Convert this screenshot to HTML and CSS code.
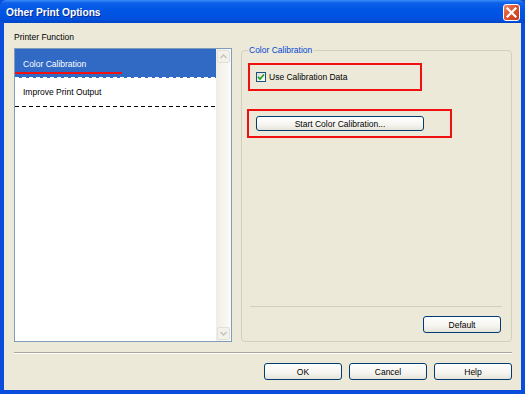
FILE: index.html
```html
<!DOCTYPE html>
<html>
<head>
	<meta charset="utf-8">
	<title>Other Print Options</title>
	<link rel="stylesheet" href="styles.css">
</head>
<body>
	<div class="window">
		<div class="titlebar">
			<span class="title">Other Print Options</span>
			<span class="close">
				<svg width="11" height="11" viewBox="0 0 11 11"><path d="M1.5 1.5 L9.5 9.5 M9.5 1.5 L1.5 9.5" stroke="#fff" stroke-width="2.2" stroke-linecap="square"/></svg>
			</span>
		</div>
		<div class="client">
			<div class="main">
				<div class="func-col">
					<div class="label">Printer Function</div>
					<div class="listbox">
						<ul class="items">
							<li class="item selected">
								<span class="item-text">Color Calibration</span>
								<span class="underline"></span>
							</li>
							<li class="item">
								<span class="item-text">Improve Print Output</span>
							</li>
						</ul>
						<div class="scrollbar">
							<div class="sb-btn">
								<svg width="7" height="5" viewBox="0 0 7 5"><path d="M0.5 4 L3.5 1 L6.5 4" fill="none" stroke="#c4c2b6" stroke-width="1.4"/></svg>
							</div>
							<div class="sb-track"></div>
							<div class="sb-btn">
								<svg width="7" height="5" viewBox="0 0 7 5"><path d="M0.5 1 L3.5 4 L6.5 1" fill="none" stroke="#c4c2b6" stroke-width="1.4"/></svg>
							</div>
						</div>
					</div>
				</div>
				<fieldset class="group">
					<legend>Color Calibration</legend>
					<div class="mark mark-check">
						<label class="check">
							<span class="box">
								<svg width="8" height="8" viewBox="0 0 8 8"><path d="M1 3.8 L3 6 L7 1.5" fill="none" stroke="#21a121" stroke-width="1.8"/></svg>
							</span>
							Use Calibration Data
						</label>
					</div>
					<div class="mark mark-btn">
						<button class="btn wide">Start Color Calibration...</button>
					</div>
					<div class="spacer"></div>
					<div class="group-foot">
						<button class="btn">Default</button>
					</div>
				</fieldset>
			</div>
			<div class="sep"></div>
			<div class="actions">
				<button class="btn">OK</button>
				<button class="btn">Cancel</button>
				<button class="btn">Help</button>
			</div>
		</div>
	</div>
</body>
</html>
```

FILE: styles.css
```css
html, body {
	margin: 0;
	padding: 0;
	width: 100%;
	height: 100%;
	overflow: hidden;
}

body {
	background-color: #ece9d8;
	font-family: "Liberation Sans", Arial, sans-serif;
	font-size: 8.5px;
	color: #000;
}

.window {
	width: 525px;
	height: 394px;
	display: flex;
	flex-direction: column;
	background-color: #0a4cdb;
}

/* title bar */
.titlebar {
	height: 23px;
	flex: none;
	display: flex;
	align-items: center;
	justify-content: space-between;
	padding: 0 5px 0 6px;
	border-radius: 6px 6px 0 0;
	background: linear-gradient(#3a8cf7 0, #0d60e9 3px, #0056e5 10px, #0052df 18px, #0045c9 23px);
}
.title {
	color: white;
	font-weight: bold;
	font-size: 10.2px;
	text-shadow: 1px 1px 0 #0a2a90;
	padding-top: 1px;
}
.close {
	width: 17px;
	height: 17px;
	box-sizing: border-box;
	border: 1px solid #fff;
	border-radius: 3px;
	background: linear-gradient(135deg, #ef8a6c 0, #e0532f 45%, #c63c16 100%);
	display: flex;
	align-items: center;
	justify-content: center;
	margin-top: 2px;
}

/* client area */
.client {
	flex: 1;
	display: flex;
	flex-direction: column;
	background-color: #ece9d8;
	margin: 0 4px 4px 4px;
	padding: 8px 9px 10px 10px;
	box-sizing: border-box;
}
.main {
	display: flex;
	gap: 9px;
	height: 311px;
}

.func-col {
	width: 218px;
	display: flex;
	flex-direction: column;
}
.label {
	line-height: 12px;
	margin-bottom: 5px;
}

/* list */
.listbox {
	flex: 1;
	display: flex;
	border: 1px solid #7f9db9;
	background-color: white;
}
.items {
	list-style: none;
	margin: 0;
	padding: 0;
	flex: 1;
}
.item {
	height: 28px;
	padding-left: 8px;
	display: flex;
	flex-direction: column;
	justify-content: center;
	background-image: repeating-linear-gradient(to right, #000 0 4px, transparent 4px 7px);
	background-size: 100% 1px;
	background-position: left bottom;
	background-repeat: no-repeat;
	padding-bottom: 1px;
}
.item-text {
	line-height: 11px;
}
.item.selected {
	background-color: #316ac5;
	color: white;
	background-image: repeating-linear-gradient(to right, #fff 0 4px, transparent 4px 7px);
	justify-content: flex-start;
	padding-top: 10px;
	box-sizing: border-box;
	height: 29px;
}
.underline {
	display: block;
	width: 107px;
	height: 2px;
	margin: 2px 0 0 -8px;
	background-color: #f01010;
}

.scrollbar {
	width: 15px;
	display: flex;
	flex-direction: column;
	align-items: center;
	padding: 1px 0;
	box-sizing: border-box;
	background: linear-gradient(to right, #efede5, #fbfbf8);
}
.sb-btn {
	width: 13px;
	height: 13px;
	box-sizing: border-box;
	border: 1px solid #e3e1d7;
	border-radius: 2px;
	background-color: #f2f1ec;
	display: flex;
	align-items: center;
	justify-content: center;
}
.sb-track {
	flex: 1;
}

/* group box */
.group {
	flex: 1;
	margin: 14px 0 0 0;
	padding: 0 9px 8px 6px;
	border: 1px solid #d0d0bf;
	border-radius: 4px;
	display: flex;
	flex-direction: column;
	min-width: 0;
}
.group legend {
	color: #0046d5;
	line-height: 11px;
	padding: 0 2px 0 1px;
}

.mark {
	border: 2px solid #f01010;
	box-sizing: border-box;
	display: flex;
	align-items: center;
}
.mark-check {
	width: 174px;
	height: 28px;
	margin-top: 7px;
	padding-left: 6px;
}
.mark-btn {
	width: 205px;
	height: 29px;
	margin: 18px 0 0 -1px;
	padding-left: 7px;
}

.check {
	display: flex;
	align-items: center;
	gap: 3px;
}
.box {
	width: 10px;
	height: 10px;
	box-sizing: border-box;
	border: 1px solid #1c5180;
	background: linear-gradient(135deg, #dcdcd5, #fff);
	display: flex;
	align-items: center;
	justify-content: center;
}

.spacer {
	flex: 1;
}
.group-foot {
	margin-left: 2px;
	border-top: 1px solid #d0d0bf;
	padding: 9px 1px 0 0;
	display: flex;
	justify-content: flex-end;
}

/* buttons */
.btn {
	width: 78px;
	height: 17px;
	padding: 0;
	border: 1px solid #003c74;
	border-radius: 3px;
	background: linear-gradient(#ffffff 0, #f5f4ef 60%, #e6e3d8 100%);
	font-family: "Liberation Sans", Arial, sans-serif;
	font-size: 8.5px;
	color: #000;
}
.btn.wide {
	width: 168px;
	height: 15px;
}

.sep {
	margin-top: 10px;
	height: 1px;
	border-top: 1px solid #aca899;
	background-color: #fff;
}
.actions {
	margin-top: 9px;
	display: flex;
	justify-content: flex-end;
	gap: 7px;
}
```
